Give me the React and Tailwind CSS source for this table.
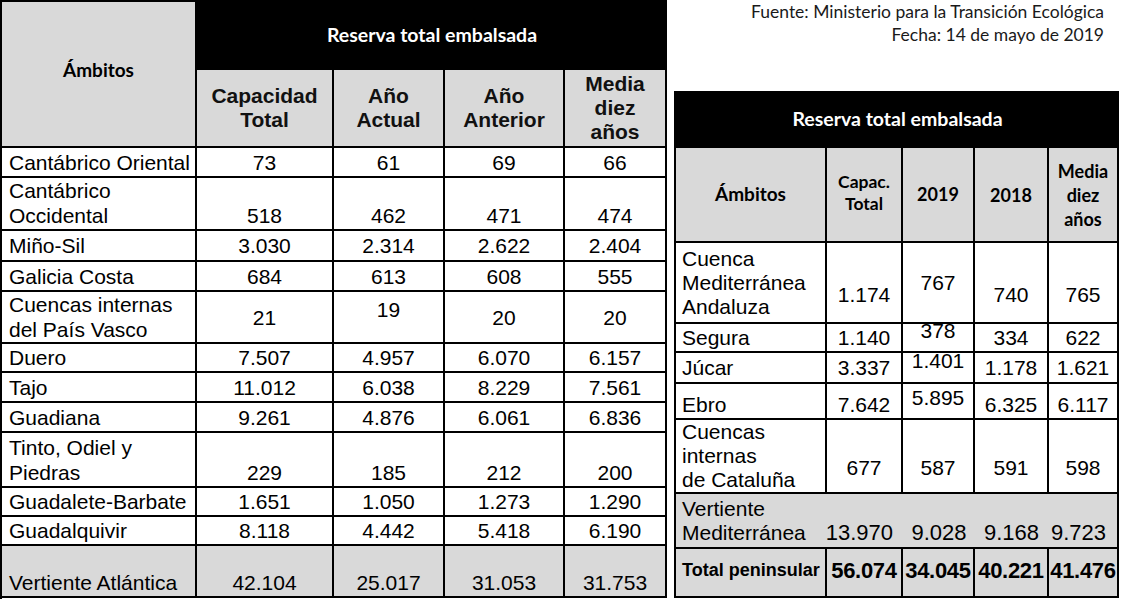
const ARIAL = "font-['Liberation_Sans',Arial,sans-serif]"
const CALIBRI = "font-['Lato','Open_Sans',sans-serif]"

const leftRows = [
  { label: ['Cantábrico Oriental'], vals: ['73', '61', '69', '66'] },
  { label: ['Cantábrico', 'Occidental'], vals: ['518', '462', '471', '474'], end: true },
  { label: ['Miño-Sil'], vals: ['3.030', '2.314', '2.622', '2.404'] },
  { label: ['Galicia Costa'], vals: ['684', '613', '608', '555'] },
  { label: ['Cuencas internas', 'del País Vasco'], vals: ['21', { v: '19', cls: 'pb-[16px]' }, '20', '20'] },
  { label: ['Duero'], vals: ['7.507', '4.957', '6.070', '6.157'] },
  { label: ['Tajo'], vals: ['11.012', '6.038', '8.229', '7.561'] },
  { label: ['Guadiana'], vals: ['9.261', '4.876', '6.061', '6.836'] },
  { label: ['Tinto, Odiel y', 'Piedras'], vals: ['229', '185', '212', '200'], end: true },
  { label: ['Guadalete-Barbate'], vals: ['1.651', '1.050', '1.273', '1.290'] },
  { label: ['Guadalquivir'], vals: ['8.118', '4.442', '5.418', '6.190'] },
  { label: ['Vertiente Atlántica'], vals: ['42.104', '25.017', '31.053', '31.753'], end: true, gray: true },
]

const rightRows = [
  { label: ['Cuenca', 'Mediterránea', 'Andaluza'], vals: ['1.174', { v: '767', cls: 'pt-[1px]' }, '740', '765'], nudge: 'pt-[25px]' },
  { label: ['Segura'], vals: ['1.140', { v: '378', cls: 'pb-[14px]' }, '334', '622'] },
  { label: ['Júcar'], vals: ['3.337', { v: '1.401', cls: 'pb-[14px]' }, '1.178', '1.621'] },
  { label: ['Ebro'], vals: ['7.642', { v: '5.895', cls: 'pb-[6px]' }, '6.325', '6.117'], nudge: 'pt-[8px]' },
  { label: ['Cuencas', 'internas', 'de Cataluña'], vals: ['677', '587', '591', '598'], nudge: 'pt-[24px]' },
]

function Cell({ children, className = '' }) {
  return <div className={`border-r-2 border-b-2 border-black flex ${className}`}>{children}</div>
}

function LeftTable() {
  return (
    <div className={`w-[667px] shrink-0 border-l-2 border-t-2 border-black grid grid-cols-[195px_137px_111px_120px_102px] grid-rows-[68px_78px_30px_53px_31px_30px_52px_29px_30px_30px_55px_29px_29px_52px] text-black ${ARIAL}`}>
      <Cell className={`row-span-2 bg-[#d9d9d9] items-center justify-center pb-[8px] ${CALIBRI} font-bold text-[19px]`}>
        Ámbitos
      </Cell>
      <div className={`col-span-4 bg-black flex items-center justify-center pb-[3px] text-white font-bold text-[19.5px] ${CALIBRI}`}>
        Reserva total embalsada
      </div>
      {[['Capacidad', 'Total'], ['Año', 'Actual'], ['Año', 'Anterior'], ['Media', 'diez', 'años']].map((h, i) => (
        <Cell key={i} className="bg-[#d9d9d9] flex-col items-center justify-center text-center font-bold text-[21px] leading-[24px] text-[#111]">
          {h.map((t) => (
            <span key={t}>{t}</span>
          ))}
        </Cell>
      ))}
      {leftRows.map((r, ri) => (
        <div key={ri} className="contents">
          <Cell
            className={`flex-col pl-[7px] text-[21px] leading-[25px] ${r.end ? 'justify-end pb-[1px]' : 'justify-center'} ${r.gray ? 'bg-[#d9d9d9]' : 'bg-white'}`}
          >
            {r.label.map((t) => (
              <span key={t} className="whitespace-nowrap">{t}</span>
            ))}
          </Cell>
          {r.vals.map((v, vi) => {
            const val = typeof v === 'string' ? { v } : v
            return (
              <Cell
                key={vi}
                className={`justify-center text-[21px] leading-[25px] ${r.end ? 'items-end pb-[1px]' : 'items-center'} ${r.gray ? 'bg-[#d9d9d9]' : 'bg-white'} ${val.cls || ''}`}
              >
                {val.v}
              </Cell>
            )
          })}
        </div>
      ))}
    </div>
  )
}

function RightTable() {
  return (
    <div className={`w-[445px] border-l-2 border-t-2 border-black grid grid-cols-[151px_76px_72px_74px_70px] grid-rows-[55px_95px_81px_29px_31px_36px_74px_55px_49px] text-black ${ARIAL}`}>
      <div className={`col-span-5 bg-black flex items-center justify-center pb-[3px] text-white font-bold text-[19.5px] ${CALIBRI}`}>
        Reserva total embalsada
      </div>
      <Cell className={`bg-[#d9d9d9] items-center justify-center font-bold text-[19px] ${CALIBRI}`}>Ámbitos</Cell>
      <Cell className={`bg-[#d9d9d9] flex-col items-center justify-center pb-[4px] font-bold text-[17.5px] leading-[22px] ${CALIBRI}`}>
        <span>Capac.</span>
        <span>Total</span>
      </Cell>
      <Cell className={`bg-[#d9d9d9] items-center justify-center font-bold text-[18px] ${CALIBRI}`}>2019</Cell>
      <Cell className={`bg-[#d9d9d9] items-center justify-center pt-[2px] font-bold text-[18px] ${CALIBRI}`}>2018</Cell>
      <Cell className={`bg-[#d9d9d9] flex-col items-center justify-center font-bold text-[18px] leading-[24px] ${CALIBRI}`}>
        <span>Media</span>
        <span>diez</span>
        <span>años</span>
      </Cell>
      {rightRows.map((r, ri) => (
        <div key={ri} className="contents">
          <Cell className={`flex-col justify-center pl-[6px] text-[21px] leading-[24px] bg-white ${r.label.length > 1 ? '' : r.nudge || ''}`}>
            {r.label.map((t) => (
              <span key={t} className="whitespace-nowrap">{t}</span>
            ))}
          </Cell>
          {r.vals.map((v, vi) => {
            const val = typeof v === 'string' ? { v } : v
            return (
              <Cell key={vi} className={`items-center justify-center text-[21px] leading-[24px] bg-white ${val.cls || r.nudge || ''}`}>
                {val.v}
              </Cell>
            )
          })}
        </div>
      ))}
      <div className="border-b-2 border-black bg-[#d9d9d9] flex flex-col justify-end pb-[2px] pl-[6px] text-[21px] leading-[24px]">
        <span>Vertiente</span>
        <span>Mediterránea</span>
      </div>
      <div className="border-b-2 border-black bg-[#d9d9d9] flex items-end justify-end pb-[2px] pr-[10px] text-[22px] leading-[24px]">13.970</div>
      <div className="border-b-2 border-black bg-[#d9d9d9] flex items-end justify-center pb-[2px] text-[22px] leading-[24px]">9.028</div>
      <div className="border-b-2 border-black bg-[#d9d9d9] flex items-end justify-end pb-[2px] pr-[10px] text-[22px] leading-[24px]">9.168</div>
      <Cell className="bg-[#d9d9d9] items-end justify-start pb-[2px] pl-[2px] text-[22px] leading-[24px]">9.723</Cell>
      <Cell className="bg-[#d9d9d9] items-center pl-[6px] pb-[4px] font-bold text-[18px] whitespace-nowrap">Total peninsular</Cell>
      {['56.074', '34.045', '40.221', '41.476'].map((v) => (
        <Cell key={v} className="bg-[#d9d9d9] items-center justify-center pb-[4px] font-bold text-[22px] tracking-[-0.3px]">
          {v}
        </Cell>
      ))}
    </div>
  )
}

export default function App() {
  return (
    <div className="w-[1122px] h-[599px] bg-white flex overflow-hidden">
      <LeftTable />
      <div className="ml-[7px] flex flex-col">
        <div className={`pt-0 pr-[15px] text-right text-[17.5px] leading-[23px] text-[#1a1a1a] ${CALIBRI}`}>
          <p>Fuente: Ministerio para la Transición Ecológica</p>
          <p>Fecha: 14 de mayo de 2019</p>
        </div>
        <div className="mt-[45px]">
          <RightTable />
        </div>
      </div>
    </div>
  )
}
